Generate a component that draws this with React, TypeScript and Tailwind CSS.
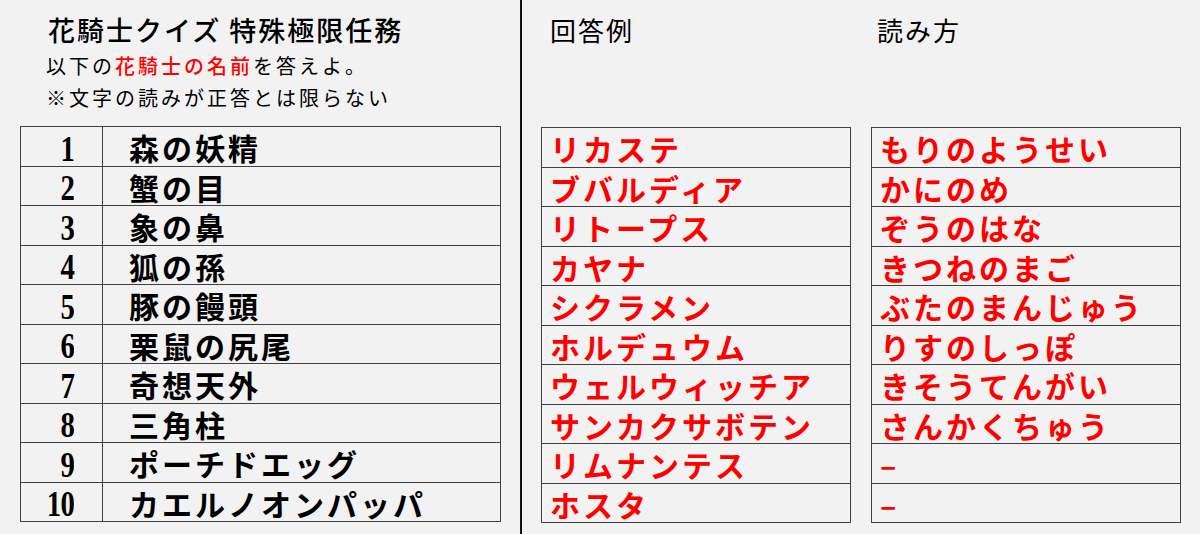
const rows = [
  { no: 1, hint: "森の妖精", answer: "リカステ", reading: "もりのようせい" },
  { no: 2, hint: "蟹の目", answer: "ブバルディア", reading: "かにのめ" },
  { no: 3, hint: "象の鼻", answer: "リトープス", reading: "ぞうのはな" },
  { no: 4, hint: "狐の孫", answer: "カヤナ", reading: "きつねのまご" },
  { no: 5, hint: "豚の饅頭", answer: "シクラメン", reading: "ぶたのまんじゅう" },
  { no: 6, hint: "栗鼠の尻尾", answer: "ホルデュウム", reading: "りすのしっぽ" },
  { no: 7, hint: "奇想天外", answer: "ウェルウィッチア", reading: "きそうてんがい" },
  { no: 8, hint: "三角柱", answer: "サンカクサボテン", reading: "さんかくちゅう" },
  { no: 9, hint: "ポーチドエッグ", answer: "リムナンテス", reading: "–" },
  { no: 10, hint: "カエルノオンパッパ", answer: "ホスタ", reading: "–" },
];

const jp = "font-['Noto_Sans_CJK_JP','Noto_Sans',sans-serif]";
const cell = `${jp} text-[30px] font-bold tracking-[3px] leading-[39px] whitespace-nowrap`;

function AnswerTable({ values }: { values: string[] }) {
  return (
    <div className="w-[310px] border-t border-x border-[#404040]">
      {values.map((v, i) => (
        <div
          key={i}
          className={`flex h-[39.5px] items-center border-b border-[#404040] pl-[8px] pt-[3px] text-[#ff0000] ${cell}`}
        >
          {v}
        </div>
      ))}
    </div>
  );
}

export default function App() {
  return (
    <div className={`flex h-[534px] w-[1200px] overflow-hidden bg-[#f2f2f2] text-black ${jp}`}>
      <section className="w-[520px] shrink-0 pl-[20px] pt-[14px]">
        <div className="pl-[28px]">
          <h1 className="flex gap-[8px] text-[27px] font-medium leading-[32px] tracking-[2px]">
            <span>花騎士クイズ</span>
            <span>特殊極限任務</span>
          </h1>
          <p className="-ml-[2px] mt-[4px] text-[20px] leading-[32px] tracking-[3px]">
            以下の<span className="font-medium text-[#ff0000]">花騎士の名前</span>を答えよ。
          </p>
          <p className="-ml-[2px] text-[20px] leading-[31px] tracking-[3px]">
            ※文字の読みが正答とは限らない
          </p>
        </div>

        <div className="mt-[13px] w-[481px] border-t border-x border-[#404040]">
          {rows.map((r) => (
            <div key={r.no} className="flex h-[39.5px] border-b border-[#404040]">
              <div className="flex w-[82px] shrink-0 items-center justify-end border-r border-[#404040] pr-[28px] pt-[5px]">
                <span className="origin-right scale-x-[0.8] font-['Liberation_Serif',serif] text-[36px] font-bold leading-[36px] tracking-[-1px]">
                  {r.no}
                </span>
              </div>
              <div className={`flex items-center pl-[26px] pt-[3px] ${cell}`}>{r.hint}</div>
            </div>
          ))}
        </div>
      </section>

      <div className="w-[2px] shrink-0 bg-[#111]" />

      <section className="flex gap-[20px] pl-[19px] pt-[14px]">
        <div>
          <h2 className="pl-[9px] text-[26px] leading-[32px] tracking-[2px]">回答例</h2>
          <div className="mt-[81px]">
            <AnswerTable values={rows.map((r) => r.answer)} />
          </div>
        </div>
        <div>
          <h2 className="pl-[6px] text-[26px] leading-[32px] tracking-[2px]">読み方</h2>
          <div className="mt-[81px]">
            <AnswerTable values={rows.map((r) => r.reading)} />
          </div>
        </div>
      </section>
    </div>
  );
}
